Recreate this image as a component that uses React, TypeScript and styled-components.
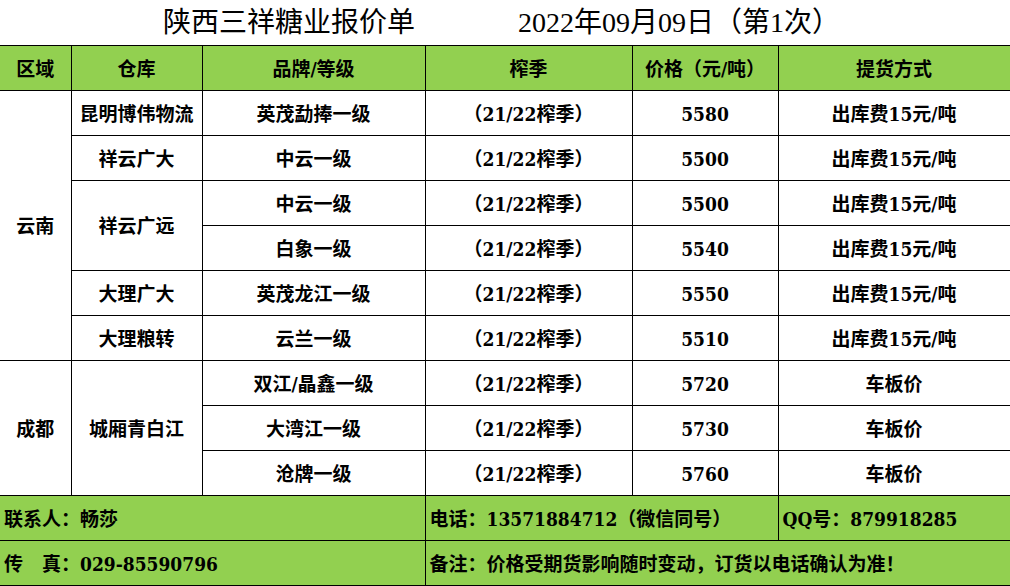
import React from "react";
import styled, { createGlobalStyle } from "styled-components";

const TITLE_FONT = `"Liberation Serif", "Noto Sans CJK SC", serif`;
const BODY_FONT = `"DejaVu Serif Condensed", "DejaVu Serif", "Noto Sans CJK SC", serif`;

const GlobalStyle = createGlobalStyle`
  html, body {
    margin: 0;
    padding: 0;
    background: #ffffff;
  }
  body {
    font-family: ${TITLE_FONT};
    color: #000000;
  }
`;

const Sheet = styled.div`
  width: 1010px;
  height: 586px;
  overflow: hidden;
  background: #ffffff;
`;

const TitleBar = styled.div`
  display: flex;
  align-items: center;
  height: 45px;
  padding-left: 163px;
  gap: 103px;
  font-family: ${TITLE_FONT};
  font-size: 28px;
  line-height: 1;
  white-space: nowrap;
`;

const Table = styled.table`
  width: 1010px;
  border-collapse: collapse;
  table-layout: fixed;
  font-family: ${BODY_FONT};
  font-stretch: condensed;
  font-size: 19px;
  font-weight: 700;
`;

const Row = styled.tr`
  height: 45px;
`;

const Cell = styled.td<{ $head?: boolean; $foot?: boolean; $first?: boolean }>`
  border: 1px solid #000000;
  border-left: ${({ $first }) => ($first ? "none" : "1px solid #000000")};
  padding: ${({ $foot }) => ($foot ? "2px 0 0 4px" : "2px 0 0")};
  text-align: ${({ $foot }) => ($foot ? "left" : "center")};
  vertical-align: middle;
  background: ${({ $head, $foot }) => ($head || $foot ? "#92d050" : "#ffffff")};
  white-space: nowrap;
  overflow: hidden;
  line-height: 1;
`;

type Item = { brand: string; price: number; pickup: string };
type Group = { warehouse: string; items: Item[] };

const yunnan: Group[] = [
  { warehouse: "昆明博伟物流", items: [{ brand: "英茂勐捧一级", price: 5580, pickup: "出库费15元/吨" }] },
  { warehouse: "祥云广大", items: [{ brand: "中云一级", price: 5500, pickup: "出库费15元/吨" }] },
  {
    warehouse: "祥云广远",
    items: [
      { brand: "中云一级", price: 5500, pickup: "出库费15元/吨" },
      { brand: "白象一级", price: 5540, pickup: "出库费15元/吨" },
    ],
  },
  { warehouse: "大理广大", items: [{ brand: "英茂龙江一级", price: 5550, pickup: "出库费15元/吨" }] },
  { warehouse: "大理粮转", items: [{ brand: "云兰一级", price: 5510, pickup: "出库费15元/吨" }] },
];

const chengdu: Group[] = [
  {
    warehouse: "城厢青白江",
    items: [
      { brand: "双江/晶鑫一级", price: 5720, pickup: "车板价" },
      { brand: "大湾江一级", price: 5730, pickup: "车板价" },
      { brand: "沧牌一级", price: 5760, pickup: "车板价" },
    ],
  },
];

const SEASON = "（21/22榨季）";

function regionRows(region: string, groups: Group[]) {
  const total = groups.reduce((n, g) => n + g.items.length, 0);
  const rows: React.ReactNode[] = [];
  groups.forEach((g, gi) => {
    g.items.forEach((it, ii) => {
      rows.push(
        <Row key={`${region}-${gi}-${ii}`}>
          {gi === 0 && ii === 0 && (
            <Cell $first rowSpan={total}>
              {region}
            </Cell>
          )}
          {ii === 0 && <Cell rowSpan={g.items.length}>{g.warehouse}</Cell>}
          <Cell>{it.brand}</Cell>
          <Cell>{SEASON}</Cell>
          <Cell>{it.price}</Cell>
          <Cell>{it.pickup}</Cell>
        </Row>
      );
    });
  });
  return rows;
}

export default function App() {
  return (
    <Sheet>
      <GlobalStyle />
      <TitleBar>
        <span>陕西三祥糖业报价单</span>
        <span>2022年09月09日（第1次）</span>
      </TitleBar>
      <Table>
        <colgroup>
          <col style={{ width: 71 }} />
          <col style={{ width: 131 }} />
          <col style={{ width: 223 }} />
          <col style={{ width: 207 }} />
          <col style={{ width: 146 }} />
          <col style={{ width: 232 }} />
        </colgroup>
        <tbody>
          <Row>
            <Cell $head $first>区域</Cell>
            <Cell $head>仓库</Cell>
            <Cell $head>品牌/等级</Cell>
            <Cell $head>榨季</Cell>
            <Cell $head>价格（元/吨）</Cell>
            <Cell $head>提货方式</Cell>
          </Row>
          {regionRows("云南", yunnan)}
          {regionRows("成都", chengdu)}
          <Row>
            <Cell $foot $first colSpan={3}>联系人：畅莎</Cell>
            <Cell $foot colSpan={2}>电话：13571884712（微信同号）</Cell>
            <Cell $foot>QQ号：879918285</Cell>
          </Row>
          <Row>
            <Cell $foot $first colSpan={3}>传　真：029-85590796</Cell>
            <Cell $foot colSpan={3}>备注：价格受期货影响随时变动，订货以电话确认为准！</Cell>
          </Row>
        </tbody>
      </Table>
    </Sheet>
  );
}
